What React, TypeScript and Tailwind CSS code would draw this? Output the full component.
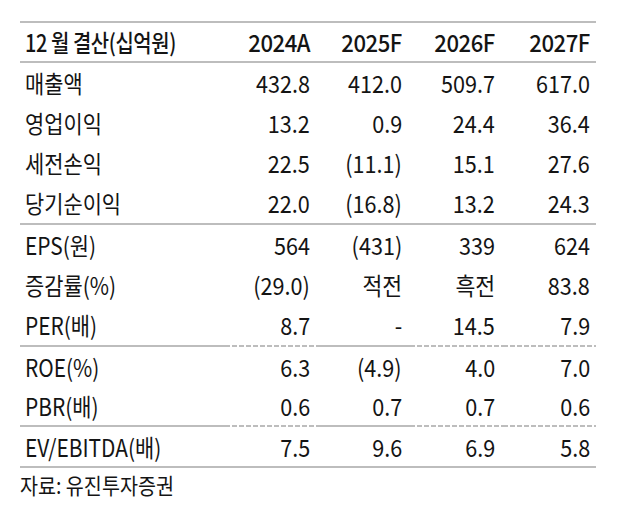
import * as React from 'react';

type Line = 'none' | 'solid' | 'mixed';

const rows: { label: string; values: string[]; line: Line; h: string }[] = [
  { label: '매출액', values: ['432.8', '412.0', '509.7', '617.0'], line: 'none', h: 'h-[40px]' },
  { label: '영업이익', values: ['13.2', '0.9', '24.4', '36.4'], line: 'none', h: 'h-[40px]' },
  { label: '세전손익', values: ['22.5', '(11.1)', '15.1', '27.6'], line: 'none', h: 'h-[40px]' },
  { label: '당기순이익', values: ['22.0', '(16.8)', '13.2', '24.3'], line: 'solid', h: 'h-[42px]' },
  { label: 'EPS(원)', values: ['564', '(431)', '339', '624'], line: 'none', h: 'h-[40px]' },
  { label: '증감률(%)', values: ['(29.0)', '적전', '흑전', '83.8'], line: 'none', h: 'h-[40px]' },
  { label: 'PER(배)', values: ['8.7', '-', '14.5', '7.9'], line: 'mixed', h: 'h-[42px]' },
  { label: 'ROE(%)', values: ['6.3', '(4.9)', '4.0', '7.0'], line: 'none', h: 'h-[39px]' },
  { label: 'PBR(배)', values: ['0.6', '0.7', '0.7', '0.6'], line: 'mixed', h: 'h-[41px]' },
  { label: 'EV/EBITDA(배)', values: ['7.5', '9.6', '6.9', '5.8'], line: 'solid', h: 'h-[41px]' },
];

// which cells get a dashed bottom line on "mixed" rows (label, 2024A, 2025F, 2026F, 2027F)
const dashed = [false, true, false, true, true];

const font = { fontFamily: '"Noto Sans CJK KR", "Noto Sans", sans-serif' };

function Rule({ line, i }: { line: Line; i: number }) {
  if (line === 'none') return null;
  if (line === 'solid' || !dashed[i]) return <div className="h-[2px] bg-[#bdbdbd]" />;
  // about 5px on / 2px off, like the source
  return (
    <div className="h-[2px] flex gap-[2px] overflow-hidden">
      {Array.from({ length: 14 }).map((_, k) => (
        <div key={k} className="h-[2px] w-[5px] shrink-0 bg-[#bdbdbd]" />
      ))}
    </div>
  );
}

export default function App() {
  return (
    <div className="w-[626px] h-[514px] bg-white text-[#141414]" style={font}>
      <div className="pt-[21px] pl-[20px]">
        <div className="w-[576px] border-t-2 border-[#bdbdbd]">
          {/* header */}
          <div className="grid grid-cols-[205px_93px_92px_93px_93px] h-[40px] border-b-2 border-[#bdbdbd] font-medium text-[24px] leading-none">
            <div className="flex items-center pl-[5px]">
              <span className="inline-block scale-x-[0.83] origin-left whitespace-nowrap tracking-[-0.5px]">12 월 결산(십억원)</span>
            </div>
            {['2024A', '2025F', '2026F', '2027F'].map((y, i) => (
              <div key={y} className={'flex items-center justify-end ' + (i === 3 ? 'pr-[6px]' : 'pr-[8px]')}>
                <span className="inline-block scale-x-[0.92] origin-right tracking-[-0.5px]">{y}</span>
              </div>
            ))}
          </div>

          {rows.map((r) => (
            <div key={r.label} className={'grid grid-cols-[205px_93px_92px_93px_93px] text-[24px] leading-none ' + r.h}>
              <div className="flex flex-col">
                <div className="flex-1 flex items-center pl-[5px]">
                  <span className="inline-block scale-x-[0.87] origin-left whitespace-nowrap">{r.label}</span>
                </div>
                <Rule line={r.line} i={0} />
              </div>
              {r.values.map((v, i) => (
                <div key={i} className="flex flex-col">
                  <div className={'flex-1 flex items-center justify-end ' + (i === 3 ? 'pr-[6px]' : 'pr-[8px]')}>
                    <span className="inline-block scale-x-[0.9] origin-right whitespace-nowrap">{v}</span>
                  </div>
                  <Rule line={r.line} i={i + 1} />
                </div>
              ))}
            </div>
          ))}
        </div>
        <div className="mt-[5px] text-[22px] leading-none">
          <span className="inline-block scale-x-[0.89] origin-left whitespace-nowrap">자료: 유진투자증권</span>
        </div>
      </div>
    </div>
  );
}
